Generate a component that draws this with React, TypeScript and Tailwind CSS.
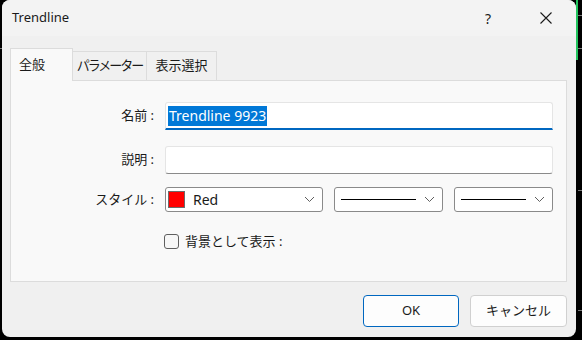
import React from 'react';

const font = { fontFamily: '"Noto Sans", "Noto Sans CJK JP", sans-serif' };

const Chevron: React.FC = () => (
  <svg width="11" height="7" viewBox="0 0 11 7" className="shrink-0">
    <path d="M1 1l4.5 4.5L10 1" fill="none" stroke="#5f5f5f" strokeWidth="1" />
  </svg>
);

const LineSelect: React.FC<{ width: string; line: string }> = ({ width, line }) => (
  <div className={`${width} h-[25px] bg-white border border-[#8a8a8a] rounded-[3px] flex items-center pl-[6px] pr-[7px] justify-between`}>
    <div className={`${line} h-[1px] bg-black`} />
    <Chevron />
  </div>
);

export default function App() {
  return (
    <div className="relative w-[582px] h-[340px] bg-black overflow-hidden" style={font}>
      {/* chart edges behind the dialog */}
      <div className="absolute left-[576px] top-0 w-[2px] h-[60px] bg-[#22c55e]" />
      <div className="absolute left-[578px] top-[15px] w-[4px] h-[1px] bg-[#777]" />
      <div className="absolute left-[578px] top-[48px] w-[4px] h-[1px] bg-[#777]" />
      <div className="absolute left-[578px] top-[190px] w-[4px] h-[1px] bg-[#777]" />
      <div className="absolute left-[578px] top-[310px] w-[4px] h-[1px] bg-[#777]" />
      <div className="absolute left-0 top-[48px] w-[2px] h-[1px] bg-[#777]" />

      <div className="ml-[2px] w-[574px] h-[337px] bg-[#f0f0f0] rounded-[8px] overflow-hidden flex flex-col">
        <div className="h-[36px] shrink-0 bg-[#f3f3f3] flex items-center pl-[10px] text-[13px] text-[#1a1a1a]">
          <span className="flex-1 -mt-[1px]">Trendline</span>
          <span className="w-[20px] text-center text-[14px] mr-[42px]">?</span>
          <svg width="12" height="12" viewBox="0 0 12 12" className="mr-[24px]">
            <path d="M0.5 0.5l11 11M11.5 0.5l-11 11" stroke="#1a1a1a" strokeWidth="1.1" />
          </svg>
        </div>

        <div className="flex-1 flex flex-col pl-[8px] pr-[9px]">
          <div className="flex items-end h-[44px] text-[13px] text-[#1a1a1a] whitespace-nowrap">
            <div className="w-[63px] h-[33px] bg-[#f9f9f9] border border-b-0 border-[#dcdcdc] flex items-center pl-[8px] relative top-[1px] z-10">
              全般
            </div>
            <div className="w-[74px] h-[29px] border border-l-0 border-b-0 border-[#dcdcdc] flex items-center justify-center tracking-[-2px]">
              パラメーター
            </div>
            <div className="w-[70px] h-[29px] border border-l-0 border-b-0 border-[#dcdcdc] flex items-center justify-center">
              表示選択
            </div>
          </div>

          <div className="h-[202px] bg-[#f9f9f9] border border-[#dcdcdc] pt-[21px] text-[13px] text-[#1a1a1a]">
            <div className="flex items-center">
              <div className="w-[145px] text-right pr-[2px]">名前 :</div>
              <div className="ml-[9px] w-[388px] h-[28px] bg-white border border-[#e5e5e5] border-b-2 border-b-[#0067c0] rounded-t-[3px] flex items-center pl-[2px] text-[14px]">
                <span className="bg-[#0078d7] text-white px-[1px] leading-[20px]">Trendline 9923</span>
              </div>
            </div>

            <div className="flex items-center mt-[16px]">
              <div className="w-[145px] text-right pr-[2px]">説明 :</div>
              <div className="ml-[9px] w-[388px] h-[28px] bg-white border border-[#e5e5e5] border-b-[#8a8a8a] rounded-[3px]" />
            </div>

            <div className="flex items-center mt-[13px]">
              <div className="w-[145px] text-right pr-[2px]">スタイル :</div>
              <div className="ml-[9px] w-[158px] h-[25px] bg-white border border-[#8a8a8a] rounded-[3px] flex items-center pl-[2px] pr-[7px]">
                <div className="w-[17px] h-[17px] bg-[#ff0000] border border-[#6b6b6b]" />
                <span className="ml-[8px] flex-1 text-[14px]">Red</span>
                <Chevron />
              </div>
              <div className="ml-[11px]">
                <LineSelect width="w-[109px]" line="w-[75px]" />
              </div>
              <div className="ml-[11px]">
                <LineSelect width="w-[99px]" line="w-[65px]" />
              </div>
            </div>

            <div className="flex items-center mt-[20px] ml-[153px]">
              <div className="w-[15px] h-[15px] bg-[#f7f7f7] border border-[#5f5f5f] rounded-[3px]" />
              <span className="ml-[6px]">背景として表示 :</span>
            </div>
          </div>

          <div className="flex justify-end gap-[11px] mt-[13px] text-[13px] text-[#1a1a1a]">
            <div className="w-[96px] h-[32px] bg-[#fdfdfd] border border-[#0067c0] rounded-[4px] flex items-center justify-center">
              OK
            </div>
            <div className="w-[97px] h-[32px] bg-[#fdfdfd] border border-[#d0d0d0] rounded-[4px] flex items-center justify-center">
              キャンセル
            </div>
          </div>
        </div>
      </div>
    </div>
  );
}
